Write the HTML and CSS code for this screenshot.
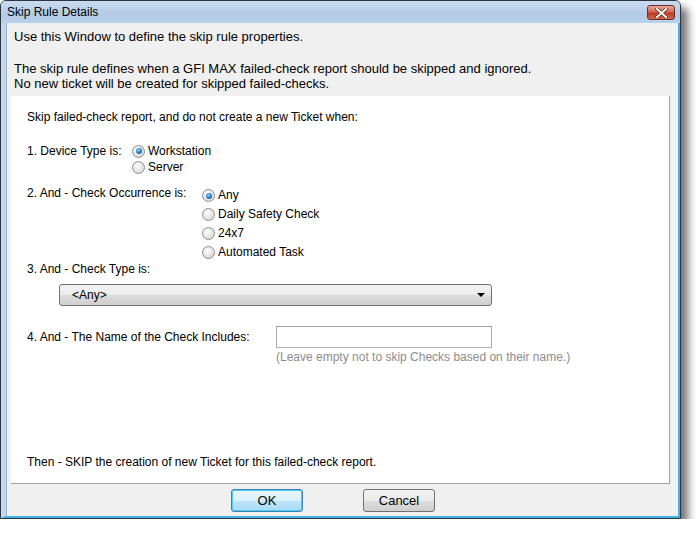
FILE: index.html
```html
<!DOCTYPE html>
<html>
<head>
<meta charset="utf-8">
<link rel="stylesheet" href="styles.css">
</head>
<body>
<div class="window">
  <div class="titlebar">
    <span class="title">Skip Rule Details</span>
    <span class="close">
      <svg width="13" height="10" viewBox="0 0 13 10">
        <path d="M2 1 L11 9 M11 1 L2 9" stroke="#5a2a22" stroke-width="3.4" stroke-linecap="square"/>
        <path d="M2 1 L11 9 M11 1 L2 9" stroke="#ffffff" stroke-width="2" stroke-linecap="square"/>
      </svg>
    </span>
  </div>
  <div class="client">
    <p class="intro first">Use this Window to define the skip rule properties.</p>
    <p class="intro second">The skip rule defines when a GFI MAX failed-check report should be skipped and ignored.<br>No new ticket will be created for skipped failed-checks.</p>

    <div class="panel">
      <div class="line">Skip failed-check report, and do not create a new Ticket when:</div>

      <div class="row device">
        <div class="label device-label">1. Device Type is:</div>
        <div class="options tight">
          <div class="option"><span class="radio checked"></span>Workstation</div>
          <div class="option"><span class="radio"></span>Server</div>
        </div>
      </div>

      <div class="row occurrence">
        <div class="label occ-label">2. And - Check Occurrence is:</div>
        <div class="options loose">
          <div class="option"><span class="radio checked"></span>Any</div>
          <div class="option"><span class="radio"></span>Daily Safety Check</div>
          <div class="option"><span class="radio"></span>24x7</div>
          <div class="option"><span class="radio"></span>Automated Task</div>
        </div>
      </div>

      <div class="line">3. And - Check Type is:</div>
      <div class="select">
        <span>&lt;Any&gt;</span>
        <span class="arrow"></span>
      </div>

      <div class="row name-row">
        <div class="label name-label">4. And - The Name of the Check Includes:</div>
        <div class="textbox"></div>
      </div>
      <div class="hint">(Leave empty not to skip Checks based on their name.)</div>

      <div class="line then">Then - SKIP the creation of new Ticket for this failed-check report.</div>
    </div>

    <div class="buttons">
      <div class="btn default">OK</div>
      <div class="btn">Cancel</div>
    </div>
  </div>
</div>
</body>
</html>
```

FILE: styles.css
```css
body {
    margin: 0;
    background: #ffffff;
    font-family: "Liberation Sans", Arial, sans-serif;
    font-size: 12px;
    color: #000000;
}

.window {
    width: 681px;
    height: 519px;
    box-sizing: border-box;
    border: 1px solid #2c3540;
    border-radius: 6px 6px 0 0;
    background: #c4d7ed;
    box-shadow: 7px 7px 9px rgba(0, 0, 0, 0.55);
    display: flex;
    flex-direction: column;
}

.titlebar {
    height: 22px;
    flex: none;
    display: flex;
    align-items: flex-start;
    justify-content: space-between;
    background: linear-gradient(#c9dbef, #b4cbe6 60%, #b9d0ea);
    border-radius: 5px 5px 0 0;
}

.title {
    padding: 4px 0 0 6px;
    font-size: 12px;
    line-height: 14px;
    color: #000000;
}

.close {
    width: 26px;
    height: 13px;
    margin: 4px 5px 0 0;
    border: 1px solid #6b2f27;
    border-radius: 3px;
    background: linear-gradient(#e8a99c, #d2664f 45%, #c0391f 55%, #cf6a4e);
    display: flex;
    align-items: center;
    justify-content: center;
}

.client {
    flex: 1;
    background: #f0f0f0;
    border-left: 5px solid #c4d7ed;
    border-right: 2px solid #3fb3e5;
    border-bottom: 2px solid #3fb3e5;
    box-shadow: inset 1px 0 0 #9fb3cb;
    display: flex;
    flex-direction: column;
}

.intro {
    margin: 0;
    padding-left: 8px;
    font-size: 13px;
    line-height: 15px;
}

.intro.first {
    padding-top: 6px;
}

.intro.second {
    margin-top: 17px;
}

.panel {
    margin: 5px 0 0 5px;
    width: 659px;
    height: 388px;
    box-sizing: border-box;
    background: #ffffff;
    border-right: 1px solid #a0a0a0;
    border-bottom: 1px solid #a0a0a0;
    padding: 14px 0 0 16px;
    display: flex;
    flex-direction: column;
    line-height: 15px;
}

.row {
    display: flex;
}

.row.device {
    margin-top: 18px;
}

.row.occurrence {
    margin-top: 11px;
}

.device-label {
    width: 105px;
    padding-top: 1px;
}

.occ-label {
    width: 175px;
}

.option {
    display: flex;
    align-items: center;
}

.tight .option {
    height: 16px;
}

.loose .option {
    height: 19px;
}

.radio {
    width: 11px;
    height: 11px;
    border: 1px solid #8f8f8f;
    border-radius: 50%;
    margin-right: 3px;
    background: radial-gradient(circle at 40% 35%, #fdfdfd, #e2e2e2 60%, #cfcfcf);
    display: flex;
    align-items: center;
    justify-content: center;
}

.radio.checked::after {
    content: "";
    width: 6px;
    height: 6px;
    border-radius: 50%;
    background: radial-gradient(circle at 40% 35%, #8fd3ff, #1d7ac4 55%, #0b3f78);
}

.select {
    margin: 7px 0 0 32px;
    width: 433px;
    height: 22px;
    box-sizing: border-box;
    border: 1px solid #707070;
    border-radius: 3px;
    background: linear-gradient(#f3f3f3, #ebebeb 50%, #dddddd 51%, #cfcfcf);
    display: flex;
    align-items: center;
    justify-content: space-between;
    padding: 0 6px 0 12px;
}

.arrow {
    width: 0;
    height: 0;
    border-left: 4px solid transparent;
    border-right: 4px solid transparent;
    border-top: 4px solid #000000;
}

.name-row {
    margin-top: 20px;
    align-items: center;
}

.name-label {
    width: 249px;
}

.textbox {
    width: 216px;
    height: 22px;
    box-sizing: border-box;
    border: 1px solid #abadb3;
    border-top-color: #9a9ca3;
    background: #ffffff;
}

.hint {
    margin: 2px 0 0 249px;
    color: #8d8d8d;
}

.then {
    margin-top: auto;
    margin-bottom: 13px;
}

.buttons {
    display: flex;
    gap: 60px;
    padding: 5px 0 0 225px;
}

.btn {
    width: 72px;
    height: 23px;
    box-sizing: border-box;
    border: 1px solid #707070;
    border-radius: 3px;
    background: linear-gradient(#f2f2f2, #ebebeb 50%, #dddddd 51%, #cfcfcf);
    display: flex;
    align-items: center;
    justify-content: center;
    font-size: 13px;
}

.btn.default {
    border-color: #3c7fb1;
    background: linear-gradient(#e9f6fd, #d9f0fc 50%, #bee6fd 51%, #a7d9f5);
    box-shadow: inset 0 0 0 1px #48d0fb;
}
```
